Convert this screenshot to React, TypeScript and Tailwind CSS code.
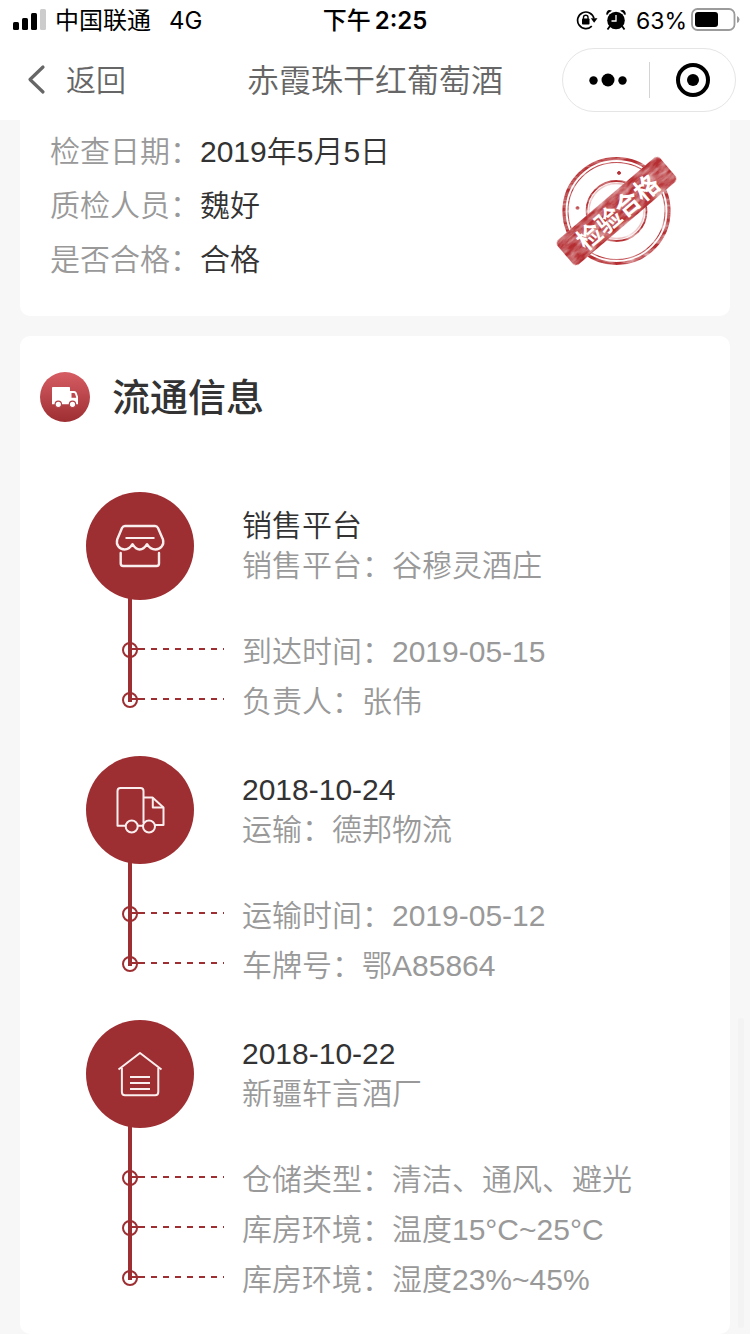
import type { ReactNode } from "react";

const CRIMSON = "#9d2e32";

type Stage = {
  title: string;
  subtitle: string;
  icon: ReactNode;
  details: string[];
};

function ShopIcon() {
  return (
    <svg viewBox="0 0 108 108" className="size-[108px]" fill="none" stroke="#fbeeee" strokeWidth="2.4" strokeLinecap="round" strokeLinejoin="round" aria-hidden="true">
      <path d="M40 34H69Q71 34 72 36L77 47.500C78.500 53 74.500 57.500 69.500 57.500C65.500 57.500 63 55.500 61 52.200C59 55.500 57 57.500 53.700 57.500C50.500 57.500 48.500 55.500 46.500 52.200C44.500 55.500 42.500 57.500 38.500 57.500C33.500 57.500 29.700 53 31.200 47.500L36 36Q37 34 39 34Z" />
      <path d="M39.500 46H68.500" strokeWidth="2" strokeLinecap="butt" />
      <path d="M34.700 61V71.500Q34.700 74 37.200 74H70.500Q73 74 73 71.500V61" />
    </svg>
  );
}

function TruckIcon() {
  return (
    <svg viewBox="0 0 108 108" className="size-[108px]" fill="none" stroke="#fbeeee" strokeWidth="2" strokeLinejoin="round" aria-hidden="true">
      <path d="M39.700 69.700H31.500V35Q31.500 32 34.500 32H54.500Q57.500 32 57.500 35V67" />
      <path d="M57.500 41.500H66.500L77.500 51.500V69H69" />
      <path d="M66.800 41.500V51.500H77.500M51.700 69.700H57" />
      <circle cx="45.700" cy="70.500" r="6" />
      <circle cx="63" cy="70.500" r="6" />
    </svg>
  );
}

function WarehouseIcon() {
  return (
    <svg viewBox="0 0 108 108" className="size-[108px]" fill="none" stroke="#fbeeee" strokeWidth="2" strokeLinejoin="round" aria-hidden="true">
      <path d="M32.500 49.500L54 33L75.500 49.500" />
      <path d="M35.900 48V72Q35.900 75.200 39 75.200H69.200Q72.300 75.200 72.300 72V48" />
      <path d="M44 57H64M44 63H64M44 69H64" />
    </svg>
  );
}

const stages: Stage[] = [
  {
    title: "销售平台",
    subtitle: "销售平台：谷穆灵酒庄",
    icon: <ShopIcon />,
    details: ["到达时间：2019-05-15", "负责人：张伟"],
  },
  {
    title: "2018-10-24",
    subtitle: "运输：德邦物流",
    icon: <TruckIcon />,
    details: ["运输时间：2019-05-12", "车牌号：鄂A85864"],
  },
  {
    title: "2018-10-22",
    subtitle: "新疆轩言酒厂",
    icon: <WarehouseIcon />,
    details: ["仓储类型：清洁、通风、避光", "库房环境：温度15°C~25°C", "库房环境：湿度23%~45%"],
  },
];

const inspection = [
  { label: "检查日期：", value: "2019年5月5日" },
  { label: "质检人员：", value: "魏好" },
  { label: "是否合格：", value: "合格" },
];

function StatusBar() {
  return (
    <div className="grid h-10 grid-cols-[1fr_auto_1fr] items-center px-3 font-['Inter','Noto_Sans_CJK_SC',sans-serif] text-[24px] leading-9 text-black">
      <div className="flex items-center">
        <svg viewBox="0 0 34 22" className="mr-[9px] h-[22px] w-[34px]" aria-hidden="true">
          <rect x="1" y="13" width="6" height="8" rx="1.500" />
          <rect x="10" y="9" width="6" height="12" rx="1.500" />
          <rect x="19" y="4" width="6" height="17" rx="1.500" />
          <rect x="28" y="0" width="6" height="21" rx="1.500" fill="#cccccc" />
        </svg>
        <span className="pt-0.5">中国联通</span>
        <span className="ml-[18px] pt-0.5">4G</span>
      </div>
      <div className="flex items-center gap-1">
        <span className="pt-0.5 font-medium">下午</span>
        <span className="pt-0.5 font-semibold">2:25</span>
      </div>
      <div className="flex items-center justify-end">
        <svg viewBox="0 0 22 20" className="mr-2 h-5 w-[22px]" aria-hidden="true">
          <path d="M15.800 16.200A8.300 8.300 0 1 1 18 8.500" fill="none" stroke="black" strokeWidth="1.700" />
          <path d="M14.800 8.200H21.500L18.100 12.800Z" />
          <rect x="6" y="8.500" width="7.500" height="6" rx="0.800" />
          <path d="M7.500 9V7.200Q7.500 5.200 9.750 5.200T12 7.200V9" fill="none" stroke="black" strokeWidth="1.400" />
        </svg>
        <svg viewBox="0 0 20 20" className="mr-2.5 size-5" aria-hidden="true">
          <circle cx="10" cy="10.500" r="8.800" />
          <path d="M1 5.200A12 12 0 0 1 6 0.800Q2.500 -1 1 1.500T1 5.200ZM19 5.200A12 12 0 0 0 14 0.800Q17.500 -1 19 1.500T19 5.200Z" />
          <path d="M4 16L1.500 19.500M16 16L18.500 19.500" stroke="black" strokeWidth="1.800" />
          <path d="M10 5V11H5.500" fill="none" stroke="white" strokeWidth="1.300" />
        </svg>
        <span className="mr-1 pt-0.5 text-[23px]">63%</span>
        <svg viewBox="0 0 49 24" className="-mr-0.5 h-6 w-[49px]" aria-hidden="true">
          <rect x="1" y="1" width="42.500" height="21" rx="5.500" fill="none" stroke="#9b9b9b" strokeWidth="1.800" />
          <rect x="4" y="4" width="23" height="15" rx="3" />
          <path d="M46 8Q48.500 9 48.500 11.500T46 15Z" fill="#9b9b9b" />
        </svg>
      </div>
    </div>
  );
}

function NavBar() {
  return (
    <div className="grid h-20 grid-cols-[1fr_auto_1fr] items-center px-[14px] text-[#666666]">
      <button type="button" className="flex items-center gap-[18px] pl-3 text-[30px] font-[350]">
        <svg viewBox="0 0 22 32" className="h-8 w-[22px]" aria-hidden="true">
          <path d="M17 3L4 15.500L17 28" fill="none" stroke="#666666" strokeWidth="3.200" strokeLinecap="round" strokeLinejoin="round" />
        </svg>
        返回
      </button>
      <h1 className="pt-0.5 text-[32px] leading-10 font-[350]">赤霞珠干红葡萄酒</h1>
      <div className="flex h-16 w-[174px] items-center justify-self-end rounded-full border border-[#e5e5e5]">
        <button type="button" aria-label="更多" className="flex h-full w-[86px] items-center justify-center pl-1">
          <svg viewBox="0 0 40 16" className="h-4 w-10" aria-hidden="true">
            <circle cx="5.500" cy="8.500" r="4.200" />
            <circle cx="20" cy="8" r="6.500" />
            <circle cx="34.500" cy="8.500" r="4.200" />
          </svg>
        </button>
        <span className="h-9 w-px bg-[#d4d4d4]" />
        <button type="button" aria-label="关闭" className="flex h-full flex-1 items-center justify-center">
          <svg viewBox="0 0 34 34" className="size-[34px]" aria-hidden="true">
            <circle cx="17" cy="17" r="15" fill="none" stroke="black" strokeWidth="4" />
            <circle cx="17" cy="17" r="6" />
          </svg>
        </button>
      </div>
    </div>
  );
}

function QualityStamp() {
  return (
    <svg viewBox="0 0 124 116" className="h-[116px] w-[124px] overflow-visible" role="img" aria-label="检验合格">
      <defs>
        <filter id="ink" x="-5%" y="-5%" width="110%" height="110%">
          <feTurbulence type="fractalNoise" baseFrequency="0.070 0.200" numOctaves="4" seed="8" result="noise" />
          <feColorMatrix in="noise" type="matrix" values="0 0 0 0 0  0 0 0 0 0  0 0 0 0 0  -1.200 0 0 0 1.400" result="wear" />
          <feComposite in="SourceGraphic" in2="wear" operator="in" />
        </filter>
      </defs>
      <g filter="url(#ink)" fill="none" stroke="#b52f33">
        <circle cx="61.500" cy="57" r="52.500" strokeWidth="3.200" />
        <circle cx="61.500" cy="57" r="48.500" strokeWidth="1.100" />
        <circle cx="61.500" cy="57" r="30" strokeWidth="1.800" />
        <circle cx="61.500" cy="57" r="27.500" strokeWidth="1.500" strokeOpacity="0.300" />
        <circle cx="64" cy="19" r="1.500" fill="#b52f33" strokeWidth="1" />
        <circle cx="22.500" cy="54" r="1.500" fill="#b52f33" strokeWidth="1" />
      </g>
      <g transform="rotate(-40.500 61.500 57)">
        <rect x="-6" y="41" width="135" height="32" rx="5" fill="white" />
        <rect x="-6" y="41" width="135" height="32" rx="5" fill="#b52f33" filter="url(#ink)" />
        <text x="62" y="68" textAnchor="middle" fontSize="25" fontWeight="700" fill="white">
          检验合格
        </text>
      </g>
    </svg>
  );
}

function InspectionCard() {
  return (
    <section className="flex justify-between rounded-b-[10px] bg-white pt-[5px] pr-[51px] pb-[29px] pl-[30px]">
      <dl className="text-[30px] leading-[54px] font-[350]">
        {inspection.map((row) => (
          <div key={row.label} className="flex">
            <dt className="text-[#999999]">{row.label}</dt>
            <dd className="text-[#333333]">{row.value}</dd>
          </div>
        ))}
      </dl>
      <div className="pt-[29px]">
        <QualityStamp />
      </div>
    </section>
  );
}

function StageBlock({ stage }: { stage: Stage }) {
  return (
    <li>
      <div className="flex gap-12">
        <div className="shrink-0 rounded-full bg-[#9d2e32]">{stage.icon}</div>
        <div className="pt-[14px] text-[30px] leading-10 font-[350]">
          <h3 className="text-[#333333]">{stage.title}</h3>
          <p className="text-[#999999]">{stage.subtitle}</p>
        </div>
      </div>
      <div className="flex pl-9">
        <div className="-mt-1 mb-[25px] -mr-[10px] ml-[6px] w-1 shrink-0 bg-[#9d2e32]" />
        <ul className="flex-1 pt-[27px] text-[30px] leading-[50px] font-[350] text-[#999999]">
          {stage.details.map((detail) => (
            <li key={detail} className="flex items-center">
              <span className="-mt-1 size-4 shrink-0 rounded-full border-2 border-[#9d2e32]" />
              <span className="-mt-1.5 mr-[18px] -ml-1.5 h-[2px] w-[92px] shrink-0 bg-[linear-gradient(90deg,#9d2e32_0_7px,transparent_7px),repeating-linear-gradient(90deg,#9d2e32_0_1px,transparent_1px_7px,#9d2e32_7px_12px)]" />
              <span>{detail}</span>
            </li>
          ))}
        </ul>
      </div>
    </li>
  );
}

function CirculationCard() {
  return (
    <section className="rounded-[10px] bg-white px-5 pt-9 pb-[29px]">
      <header className="flex h-[50px] items-center gap-[22px]">
        <svg viewBox="0 0 50 50" className="size-[50px]" aria-hidden="true">
          <defs>
            <linearGradient id="badge" x1="0" y1="0" x2="0" y2="1">
              <stop offset="0" stopColor="#d65d63" />
              <stop offset="1" stopColor={CRIMSON} />
            </linearGradient>
          </defs>
          <circle cx="25" cy="25" r="25" fill="url(#badge)" />
          <path d="M12.800 15H29.200Q30 15 30 15.800V32.300H12V15.800Q12 15 12.800 15Z" fill="white" />
          <path fillRule="evenodd" d="M30 19H34.200Q36 19 36.700 20.800L38 24.800V32.300H30ZM31.500 21V25.700H36.300L35 21.800Q34.700 21 34 21Z" fill="white" />
          <circle cx="18.300" cy="32.300" r="3.200" fill="white" stroke="#b24248" strokeWidth="1.200" />
          <circle cx="32.500" cy="32.300" r="3.200" fill="white" stroke="#b24248" strokeWidth="1.200" />
        </svg>
        <h2 className="pt-0.5 text-[38px] leading-[50px] font-medium text-[#333333]">流通信息</h2>
      </header>
      <ol className="flex flex-col gap-[29px] pt-[70px] pl-[46px]">
        {stages.map((stage) => (
          <StageBlock key={stage.title} stage={stage} />
        ))}
      </ol>
    </section>
  );
}

export default function App() {
  return (
    <div className="min-h-screen bg-[#f7f7f7] font-['Liberation_Sans','Noto_Sans_CJK_SC',sans-serif]">
      <header className="bg-white">
        <StatusBar />
        <NavBar />
      </header>
      <main className="flex flex-col gap-5 px-5">
        <InspectionCard />
        <CirculationCard />
      </main>
      <div className="fixed right-1.5 bottom-1.5 h-[310px] w-1.5 rounded-full bg-[#f3f3f3]" />
    </div>
  );
}
